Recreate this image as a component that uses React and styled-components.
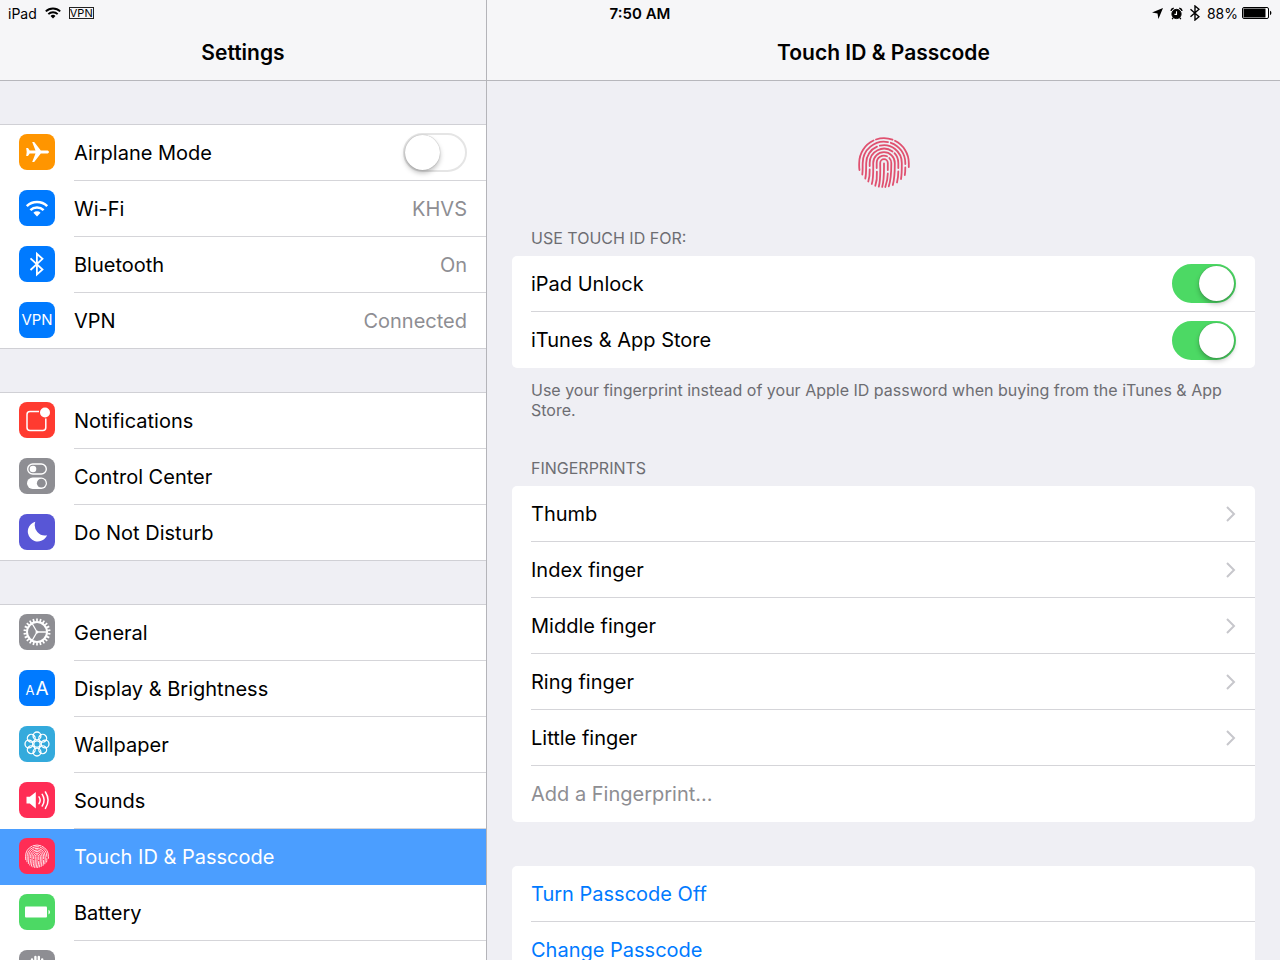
import React, { useState } from 'react'
import styled, { createGlobalStyle } from 'styled-components'

const GlobalStyle = createGlobalStyle`
  * {
    box-sizing: border-box;
  }
  body {
    margin: 0;
    background: #efeff4;
    color: #000;
    font-family: Inter, "Liberation Sans", sans-serif;
    overflow: hidden;
  }
`

const Screen = styled.div`
  position: relative;
  display: grid;
  grid-template-columns: 487fr 793fr;
  height: 100vh;
  overflow: hidden;
`

const Sidebar = styled.nav`
  border-right: 1px solid #b4b4b9;
  min-width: 0;
  height: 100vh;
  overflow: hidden;
`

const Detail = styled.main`
  min-width: 0;
  height: 100vh;
  overflow: hidden;
`

const StatusBar = styled.div`
  position: absolute;
  top: 0;
  left: 0;
  right: 0;
  display: grid;
  grid-template-columns: 1fr auto 1fr;
  align-items: center;
  height: 26px;
  padding: 0 8px;
  font-size: 14px;
`

const StatusGroup = styled.div`
  display: flex;
  align-items: center;
  justify-content: ${props => (props.$end ? 'flex-end' : 'flex-start')};
  gap: ${props => (props.$end ? '7px' : '8px')};
`

const Clock = styled.span`
  font-size: 15px;
  font-weight: 600;
`

const VpnBadge = styled.span`
  border: 1px solid #222;
  font-size: 11px;
  line-height: 10px;
`

const BatteryLevel = styled.span`
  display: flex;
  align-items: center;
  gap: 4px;
`

const Header = styled.header`
  height: 81px;
  padding-top: 26px;
  background: #f6f6f8;
  border-bottom: 1px solid #b7b7bc;
  display: flex;
  align-items: center;
  justify-content: center;
`

const Title = styled.h1`
  margin: 0;
  font-size: 21px;
  font-weight: 600;
  line-height: 54px;
`

const Group = styled.ul`
  list-style: none;
  margin: 43px 0 0;
  padding: 0;
  background: #fff;
  border-top: 1px solid #d0d0d5;
`

const Line = styled.div`
  flex: 1;
  min-width: 0;
  height: 100%;
  display: flex;
  align-items: center;
  justify-content: space-between;
  padding-right: 19px;
  border-bottom: 1px solid #d5d5d9;
`

const MenuItem = styled.li`
  display: flex;
  height: 56px;
  background: ${props => (props.$active ? '#4b9eff' : '#fff')};
  color: ${props => (props.$active ? '#fff' : '#000')};
  ${Line} {
    border-color: ${props => (props.$active ? '#4b9eff' : '#d5d5d9')};
  }
  &:last-child {
    border-bottom: 1px solid #d0d0d5;
  }
  &:last-child ${Line} {
    border-bottom: 0;
  }
`

const MenuLink = styled.a`
  flex: 1;
  display: flex;
  align-items: center;
  gap: 19px;
  padding-left: 19px;
  color: inherit;
  text-decoration: none;
`

const MenuLabel = styled.label`
  flex: 1;
  display: flex;
  align-items: center;
  gap: 19px;
  padding-left: 19px;
`

const Text = styled.span`
  font-size: 20px;
  line-height: 28px;
`

const Value = styled(Text)`
  color: #8e8e93;
`

const Tile = styled.span`
  flex: none;
  width: 36px;
  height: 36px;
  margin-bottom: 2px;
  border-radius: 8px;
  background: ${props => props.$color};
  color: #fff;
  display: flex;
  align-items: center;
  justify-content: center;
  svg {
    width: 36px;
    height: 36px;
    display: block;
  }
`

const TileText = styled.span`
  font-size: 15px;
`

const LetterPair = styled.span`
  display: flex;
  align-items: baseline;
  gap: 1px;
`

const SmallA = styled.span`
  font-size: 13px;
`

const BigA = styled.span`
  font-size: 19px;
`

const Switch = styled.input`
  appearance: none;
  flex: none;
  margin: 0;
  width: 64px;
  height: 39px;
  border-radius: 20px;
  border: 2px solid ${props => (props.checked ? '#4cd964' : '#e5e5e5')};
  background: ${props => (props.checked ? '#4cd964' : '#fff')};
  display: flex;
  align-items: center;
  justify-content: ${props => (props.checked ? 'flex-end' : 'flex-start')};
  &::before {
    content: '';
    width: 35px;
    height: 35px;
    border-radius: 50%;
    background: #fff;
    box-shadow: 0 0 1px rgba(0, 0, 0, 0.4), 0 3px 5px rgba(0, 0, 0, 0.25);
  }
`

const Content = styled.div`
  padding: 55px 25px 0;
`

const PrintWrap = styled.div`
  display: flex;
  justify-content: center;
  color: #e0506f;
  margin-bottom: 40px;
  svg {
    width: 52px;
    height: 52px;
  }
`

const SectionTitle = styled.h2`
  margin: 0;
  padding: 0 19px 8px;
  font-size: 16px;
  line-height: 20px;
  font-weight: 400;
  color: #6d6d72;
  text-transform: uppercase;
`

const Note = styled.p`
  margin: 0 0 38px;
  padding: 12px 19px 0;
  font-size: 16px;
  line-height: 20px;
  color: #6d6d72;
`

const Card = styled.ul`
  list-style: none;
  margin: 0 0 ${props => (props.$noted ? '0' : '44px')};
  padding: 0 0 0 19px;
  background: #fff;
  border-radius: 5px;
`

const CardItem = styled.li`
  height: 56px;
  border-bottom: 1px solid #d5d5d9;
  display: flex;
  &:last-child {
    border-bottom: 0;
  }
`

const CardLabel = styled.label`
  flex: 1;
  display: flex;
  align-items: center;
  justify-content: space-between;
  padding-right: 19px;
`

const CardButton = styled.button`
  flex: 1;
  display: flex;
  align-items: center;
  justify-content: space-between;
  padding: 0 19px 0 0;
  border: 0;
  background: none;
  font-family: inherit;
  text-align: left;
  color: ${props => props.$color || '#000'};
`

const Wifi = ({ width, height }) => (
  <svg width={width} height={height} viewBox="0 0 24 18" fill="none" stroke="currentColor" strokeWidth="2.8">
    <path d="M1.2 6.6a15.5 15.5 0 0 1 21.6 0" />
    <path d="M5 10.8a10 10 0 0 1 14 0" />
    <path d="M8.3 13.6a5.3 5.3 0 0 1 7.4 0L12 17.4z" fill="currentColor" stroke="none" />
  </svg>
)

const Fingerprint = ({ viewBox = '0 0 52 52' }) => (
  <svg viewBox={viewBox} fill="none" stroke="currentColor" strokeWidth="1.8" strokeLinecap="round">
    <path d="M1.5 34c-.4-2.300-.4-4.700-.3-7A24.800 24.800 0 0 1 15.500 4.500M18 3.500A24.800 24.800 0 0 1 34.500 3.700M37 4.800A24.800 24.800 0 0 1 50.800 27v4" />
    <path d="M4.300 38.500c.6-4 .2-8 .4-11.500A21.300 21.300 0 0 1 30 6.100M32.800 6.800A21.300 21.300 0 0 1 47.300 27v1M47.300 31.500c0 2.500 0 5-.5 7.500" />
    <path d="M7.300 42.500c1.200-5.500.7-10.500.9-15.500A17.800 17.800 0 0 1 19 10.700M21.800 9.700A17.800 17.800 0 0 1 43.800 27c0 5.500.1 11-.8 16" />
    <path d="M10.300 45.500c1.500-4.500 1.500-8.500 1.400-12M11.700 30v-3A14.300 14.300 0 0 1 34.500 15.500M36.500 17.200A14.300 14.300 0 0 1 40.300 27v5M40.300 35.500c0 4-.4 7.500-1.300 11" />
    <path d="M13.800 48c1.900-6.500 1.400-14 1.400-21A10.800 10.800 0 0 1 36.800 27c0 7.500.1 14.500-2 22" />
    <path d="M17.300 49.700c1.700-5 1.800-9.700 1.600-14M18.700 32v-5A7.300 7.300 0 0 1 29 20.300M31.300 22A7.300 7.300 0 0 1 33.300 27c0 8 .1 15.500-2.500 23.300" />
    <path d="M20.800 50.700c2-7.500 1.400-15.700 1.400-23.700A3.800 3.800 0 0 1 29.800 27v7M29.800 37.500c-.1 4.500-.9 9-2.500 13.500" />
    <path d="M24.200 50.900c2.100-7.500 1.800-15.700 1.800-23.400" />
  </svg>
)

const Airplane = () => (
  <svg viewBox="0 0 36 36" fill="currentColor">
    <path d="M30 18c0 .9-.9 1.500-2.200 1.500h-6L15.200 28h-2l3.300-8.500h-5.800L9 22H7.200L7.700 18 7.200 14H9l1.700 2.500h5.800L13.200 8h2l6.600 8.500h6c1.300 0 2.200.6 2.200 1.500z" />
  </svg>
)

const WifiTile = () => (
  <svg viewBox="0 0 36 36" fill="none" stroke="currentColor" strokeWidth="2.6">
    <path d="M7.8 16.1a14.8 14.8 0 0 1 20.4 0M11.4 20.1a9.6 9.6 0 0 1 13.2 0" />
    <path d="M14.4 22.7a5.3 5.3 0 0 1 7.2 0L18 26.4z" fill="currentColor" stroke="none" />
  </svg>
)

const Bluetooth = () => (
  <svg viewBox="0 0 36 36" fill="none" stroke="currentColor" strokeWidth="1.800">
    <path d="M11.500 12.300l12 11.200-5.600 5V7.800l5.600 5-12 11.200" />
  </svg>
)

const Notifications = () => (
  <svg viewBox="0 0 36 36" fill="none" stroke="currentColor" strokeWidth="1.5">
    <path d="M20 9.500H11A3 3 0 0 0 8 12.500v13A3 3 0 0 0 11 28.500h12.800a3 3 0 0 0 3-3V16.500" />
    <circle cx="26" cy="10.500" r="5" fill="currentColor" stroke="none" />
  </svg>
)

const ControlCenter = () => (
  <svg viewBox="0 0 36 36" fill="none" stroke="currentColor" strokeWidth="1.4">
    <rect x="8.7" y="6" width="18.6" height="10" rx="5" />
    <circle cx="14" cy="11" r="3.3" fill="currentColor" stroke="none" />
    <rect x="8" y="19.5" width="20" height="11.5" rx="5.7" fill="currentColor" stroke="none" />
    <circle cx="22.3" cy="25.2" r="4.4" fill="#8e8e93" stroke="none" />
  </svg>
)

const Moon = () => (
  <svg viewBox="0 0 36 36" fill="currentColor">
    <path d="M16.3 7.8a10 10 0 1 0 11.8 13.4A10.3 10.3 0 0 1 16.3 7.8z" />
  </svg>
)

const teeth = Array.from({ length: 22 }, (_, i) => (i * 360) / 22)

const Gear = () => (
  <svg viewBox="0 0 36 36" fill="none" stroke="currentColor">
    <circle cx="18" cy="18" r="10" strokeWidth="2" />
    {teeth.map(a => (
      <path key={a} d="M18 7.500V4.500" strokeWidth="1.700" transform={`rotate(${a} 18 18)`} />
    ))}
    <path d="M18 18h10M18 18l-5-8.700M18 18l-5 8.700" strokeWidth="1.300" />
    <circle cx="18" cy="18" r="1.500" fill="currentColor" stroke="none" />
  </svg>
)

const Flower = () => (
  <svg viewBox="0 0 36 36" fill="none" stroke="currentColor" strokeWidth="1.3">
    <circle cx="18" cy="18" r="3.2" />
    {[0, 45, 90, 135, 180, 225, 270, 315].map(a => (
      <circle key={a} cx="18" cy="9.9" r="3.9" transform={`rotate(${a} 18 18)`} />
    ))}
  </svg>
)

const Speaker = () => (
  <svg viewBox="0 0 36 36" fill="none" stroke="currentColor" strokeWidth="1.5" strokeLinecap="round">
    <path d="M7.500 14.800h3.300l6-4.800v16.400l-6-4.800H7.500z" fill="currentColor" stroke="none" />
    <path d="M20 14.800a6 6 0 0 1 0 6.800M23.200 12.400a10.500 10.500 0 0 1 0 11.600M26.400 10a15 15 0 0 1 0 16.400" />
  </svg>
)

const Battery = () => (
  <svg viewBox="0 0 36 36" fill="currentColor">
    <rect x="6" y="12.5" width="22" height="11" rx="1" />
    <path d="M29.500 15.800a2.500 2.500 0 0 1 0 4.600z" />
  </svg>
)

const Hand = () => (
  <svg viewBox="0 0 36 36" fill="none" stroke="currentColor" strokeWidth="2.4" strokeLinecap="round">
    <path d="M13 20V9.500M16.400 17V7M19.800 17V7M23.200 19V9.500M13 20c0 6 3 9 6.500 9s7-3 9-9" />
  </svg>
)

const Chevron = () => (
  <svg width="10" height="18" viewBox="0 0 10 18" fill="none" stroke="#c7c7cc" strokeWidth="2">
    <path d="M1 2l7 7-7 7" />
  </svg>
)

const groups = [
  [
    { name: 'Airplane Mode', color: '#ff9500', icon: <Airplane />, toggle: true },
    { name: 'Wi-Fi', color: '#007aff', icon: <WifiTile />, value: 'KHVS' },
    { name: 'Bluetooth', color: '#007aff', icon: <Bluetooth />, value: 'On' },
    { name: 'VPN', color: '#007aff', icon: <TileText>VPN</TileText>, value: 'Connected' },
  ],
  [
    { name: 'Notifications', color: '#ff3b30', icon: <Notifications /> },
    { name: 'Control Center', color: '#8e8e93', icon: <ControlCenter /> },
    { name: 'Do Not Disturb', color: '#5856d6', icon: <Moon /> },
  ],
  [
    { name: 'General', color: '#8e8e93', icon: <Gear /> },
    {
      name: 'Display & Brightness',
      color: '#007aff',
      icon: (
        <LetterPair>
          <SmallA>A</SmallA>
          <BigA>A</BigA>
        </LetterPair>
      ),
    },
    { name: 'Wallpaper', color: '#34aadc', icon: <Flower /> },
    { name: 'Sounds', color: '#ff2d55', icon: <Speaker /> },
    {
      name: 'Touch ID & Passcode',
      color: '#ff2d55',
      icon: <Fingerprint viewBox="-13 -13 78 78" />,
      active: true,
    },
    { name: 'Battery', color: '#4cd964', icon: <Battery /> },
    { name: '', color: '#8e8e93', icon: <Hand /> },
  ],
]

const fingers = ['Thumb', 'Index finger', 'Middle finger', 'Ring finger', 'Little finger']

function App() {
  const [airplane, setAirplane] = useState(false)
  const [unlock, setUnlock] = useState(true)
  const [store, setStore] = useState(true)

  return (
    <>
      <GlobalStyle />
      <Screen>
        <Sidebar>
          <Header>
            <Title>Settings</Title>
          </Header>
          {groups.map((items, i) => (
            <Group key={i}>
              {items.map(item => (
                <MenuItem key={item.name} $active={item.active}>
                  {item.toggle ? (
                    <MenuLabel>
                      <Tile $color={item.color}>{item.icon}</Tile>
                      <Line>
                        <Text>{item.name}</Text>
                        <Switch type="checkbox" checked={airplane} onChange={e => setAirplane(e.target.checked)} />
                      </Line>
                    </MenuLabel>
                  ) : (
                    <MenuLink href="#">
                      <Tile $color={item.color}>{item.icon}</Tile>
                      <Line>
                        <Text>{item.name}</Text>
                        {item.value && <Value>{item.value}</Value>}
                      </Line>
                    </MenuLink>
                  )}
                </MenuItem>
              ))}
            </Group>
          ))}
        </Sidebar>
        <Detail>
          <Header>
            <Title>Touch ID &amp; Passcode</Title>
          </Header>
          <Content>
            <PrintWrap>
              <Fingerprint />
            </PrintWrap>
            <SectionTitle>Use Touch ID for:</SectionTitle>
            <Card $noted>
              <CardItem>
                <CardLabel>
                  <Text>iPad Unlock</Text>
                  <Switch type="checkbox" checked={unlock} onChange={e => setUnlock(e.target.checked)} />
                </CardLabel>
              </CardItem>
              <CardItem>
                <CardLabel>
                  <Text>iTunes &amp; App Store</Text>
                  <Switch type="checkbox" checked={store} onChange={e => setStore(e.target.checked)} />
                </CardLabel>
              </CardItem>
            </Card>
            <Note>
              Use your fingerprint instead of your Apple ID password when buying from the iTunes &amp; App Store.
            </Note>
            <SectionTitle>Fingerprints</SectionTitle>
            <Card>
              {fingers.map(name => (
                <CardItem key={name}>
                  <CardButton>
                    <Text>{name}</Text>
                    <Chevron />
                  </CardButton>
                </CardItem>
              ))}
              <CardItem>
                <CardButton $color="#8e8e93">
                  <Text>Add a Fingerprint...</Text>
                </CardButton>
              </CardItem>
            </Card>
            <Card>
              <CardItem>
                <CardButton $color="#007aff">
                  <Text>Turn Passcode Off</Text>
                </CardButton>
              </CardItem>
              <CardItem>
                <CardButton $color="#007aff">
                  <Text>Change Passcode</Text>
                </CardButton>
              </CardItem>
            </Card>
          </Content>
        </Detail>
        <StatusBar>
          <StatusGroup>
            <span>iPad</span>
            <Wifi width="16" height="12" />
            <VpnBadge>VPN</VpnBadge>
          </StatusGroup>
          <Clock>7:50 AM</Clock>
          <StatusGroup $end>
            <svg width="11" height="11" viewBox="0 0 12 12">
              <path d="M12 0L7 12 6 6 0 5z" />
            </svg>
            <svg width="13" height="13" viewBox="0 0 14 14" fill="none" stroke="#000">
              <circle cx="7" cy="7.5" r="5" fill="#000" />
              <path d="M1 4.200A4 4 0 0 1 4 1.300M13 4.200A4 4 0 0 0 10 1.300" strokeWidth="1.6" />
              <path d="M3.500 11.500L2.300 13M10.500 11.500l1.200 1.500" strokeWidth="1.4" />
              <path d="M7 4.500V8H4.800" stroke="#fff" strokeWidth="1.2" />
            </svg>
            <svg width="10" height="16" viewBox="0 0 10 16" fill="none" stroke="#000" strokeWidth="1.4">
              <path d="M.5 4.300l8.500 7.400-4 3.300V1l4 3.300L.5 11.700" />
            </svg>
            <BatteryLevel>
              <span>88%</span>
              <svg width="30" height="12" viewBox="0 0 30 12">
                <rect x=".5" y=".5" width="26" height="11" rx="1.5" fill="#fff" stroke="#000" />
                <rect x="1.5" y="1.5" width="22" height="9" />
                <path d="M28 3.800a2.400 2.400 0 0 1 0 4.400z" />
              </svg>
            </BatteryLevel>
          </StatusGroup>
        </StatusBar>
      </Screen>
    </>
  )
}

export default App
